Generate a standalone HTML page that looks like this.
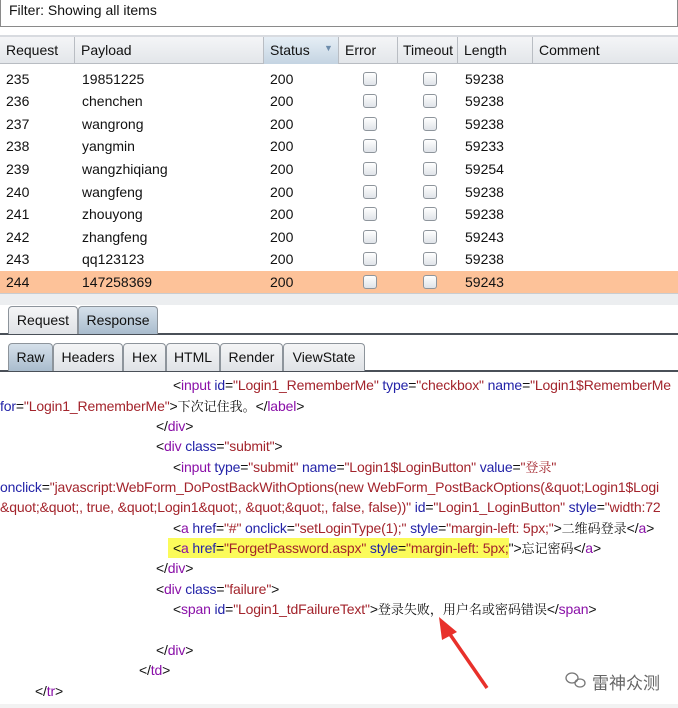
<!DOCTYPE html>
<html><head><meta charset="utf-8"><style>
*{margin:0;padding:0;box-sizing:border-box}
body{width:678px;height:708px;background:#fff;font-family:"Liberation Sans","Noto Sans CJK SC",sans-serif;font-size:14px;color:#111;position:relative;overflow:hidden}
.abs{position:absolute}
.filter{left:0;top:0;width:678px;height:27px;border:1px solid #8a8a8a;border-top:none;background:#fff;padding:2px 0 0 8px;font-size:14px}
.hdr{left:0;top:35px;width:678px;height:29px;background:linear-gradient(#f4f5f7,#e3e6ea);border-top:2px solid #d8dbe0;border-bottom:1px solid #b8bcc2}
.hdr div{position:absolute;top:0;height:27px;padding:5px 0 0 6px;border-right:1px solid #b9bdc3}
.row{position:absolute;left:0;width:678px;height:22.6px}
.row span{position:absolute;top:3px}
.cb{position:absolute;width:14px;height:14px;border:1px solid #8e959c;border-radius:3px;background:linear-gradient(#fff,#dfe3e8)}
.tab{position:absolute;height:28px;border:1px solid #8d949b;border-bottom:none;border-radius:4px 4px 0 0;background:linear-gradient(#f4f5f6,#dfe2e6);padding:5px 0 0 0;text-align:center}
.sel{background:linear-gradient(#d5e0ea,#a9bccd)}
.code{position:absolute;white-space:nowrap;font-size:14px;letter-spacing:-0.15px;line-height:18px;height:18px}
.c{font-family:"Noto Serif CJK SC",serif;font-size:13px;letter-spacing:0;line-height:18px}
.t{color:#8a10a8}.a{color:#2323a8}.v{color:#a3242c}.k{color:#111}
.hl{background:#fbfb5a;padding:2px 0 2px 5px;margin-left:-5px}
</style></head><body>
<div class="abs filter">Filter: Showing all items</div>
<div class="abs" style="left:0;top:27px;width:678px;height:8px;background:#fff"></div>
<div class="abs hdr">
<div style="left:0;width:75px">Request</div>
<div style="left:75px;width:189px">Payload</div>
<div style="left:264px;width:75px;background:linear-gradient(#e6eef5,#c4d4e2)">Status<span style="position:absolute;left:60px;top:6px;font-size:9px;color:#6d8cab">▼</span></div>
<div style="left:339px;width:59px">Error</div>
<div style="left:398px;width:60px;padding-left:5px">Timeout</div>
<div style="left:458px;width:75px">Length</div>
<div style="left:533px;width:145px;border:none">Comment</div>
</div>
<div id="rows"></div>
<div class="abs" style="left:0;top:293px;width:678px;height:12px;background:#eceef0;border-top:1px solid #c9ccd0"></div>
<div class="abs" style="left:0;top:305px;width:678px;height:30px;background:#fff;border-bottom:2px solid #4a5058"></div>
<div class="tab" style="left:8px;top:306px;width:70px">Request</div>
<div class="tab sel" style="left:78px;top:306px;width:80px">Response</div>
<div class="abs" style="left:0;top:335px;width:678px;height:37px;background:#fff;border-bottom:2px solid #4a5058"></div>
<div class="tab sel" style="left:8px;top:343px;width:45px">Raw</div>
<div class="tab" style="left:53px;top:343px;width:70px">Headers</div>
<div class="tab" style="left:123px;top:343px;width:43px">Hex</div>
<div class="tab" style="left:166px;top:343px;width:54px">HTML</div>
<div class="tab" style="left:220px;top:343px;width:63px">Render</div>
<div class="tab" style="left:283px;top:343px;width:82px">ViewState</div>

<div class="code" style="left:173px;top:376px"><span class="k">&lt;</span><span class="t">input</span> <span class="a">id</span>=<span class="v">"Login1_RememberMe"</span> <span class="a">type</span>=<span class="v">"checkbox"</span> <span class="a">name</span>=<span class="v">"Login1$RememberMe</span></div>
<div class="code" style="left:0;top:397px"><span class="a">for</span>=<span class="v">"Login1_RememberMe"</span>&gt;<span class="c">下次记住我。</span>&lt;/<span class="t">label</span>&gt;</div>
<div class="code" style="left:156px;top:417px">&lt;/<span class="t">div</span>&gt;</div>
<div class="code" style="left:156px;top:437px">&lt;<span class="t">div</span> <span class="a">class</span>=<span class="v">"submit"</span>&gt;</div>
<div class="code" style="left:173px;top:458px">&lt;<span class="t">input</span> <span class="a">type</span>=<span class="v">"submit"</span> <span class="a">name</span>=<span class="v">"Login1$LoginButton"</span> <span class="a">value</span>=<span class="v">"<span class="c">登录</span>"</span></div>
<div class="code" style="left:0;top:478px"><span class="a">onclick</span>=<span class="v">"javascript:WebForm_DoPostBackWithOptions(new WebForm_PostBackOptions(&amp;quot;Login1$Logi</span></div>
<div class="code" style="left:0;top:498px"><span class="v">&amp;quot;&amp;quot;, true, &amp;quot;Login1&amp;quot;, &amp;quot;&amp;quot;, false, false))"</span> <span class="a">id</span>=<span class="v">"Login1_LoginButton"</span> <span class="a">style</span>=<span class="v">"width:72</span></div>
<div class="code" style="left:173px;top:519px">&lt;<span class="t">a</span> <span class="a">href</span>=<span class="v">"#"</span> <span class="a">onclick</span>=<span class="v">"setLoginType(1);"</span> <span class="a">style</span>=<span class="v">"margin-left: 5px;"</span>&gt;<span class="c">二维码登录</span>&lt;/<span class="t">a</span>&gt;</div>
<div class="code" style="left:173px;top:539px"><span class="hl">&lt;<span class="t">a</span> <span class="a">href</span>=<span class="v">"ForgetPassword.aspx"</span> <span class="a">style</span>=<span class="v">"margin-left: 5px;</span></span>"&gt;<span class="c">忘记密码</span>&lt;/<span class="t">a</span>&gt;</div>
<div class="code" style="left:156px;top:559px">&lt;/<span class="t">div</span>&gt;</div>
<div class="code" style="left:156px;top:580px">&lt;<span class="t">div</span> <span class="a">class</span>=<span class="v">"failure"</span>&gt;</div>
<div class="code" style="left:173px;top:600px">&lt;<span class="t">span</span> <span class="a">id</span>=<span class="v">"Login1_tdFailureText"</span>&gt;<span class="c">登录失败，用户名或密码错误</span>&lt;/<span class="t">span</span>&gt;</div>
<div class="code" style="left:156px;top:641px">&lt;/<span class="t">div</span>&gt;</div>
<div class="code" style="left:139px;top:661px">&lt;/<span class="t">td</span>&gt;</div>
<div class="code" style="left:35px;top:682px">&lt;/<span class="t">tr</span>&gt;</div>
<div class="abs" style="left:0;top:704px;width:678px;height:4px;background:#f2f2f2"></div>
<svg class="abs" style="left:0;top:0" width="678" height="708">
<line x1="487" y1="688" x2="447" y2="630" stroke="#e8302a" stroke-width="3.5"/>
<polygon points="439,617 457,632 442,640" fill="#e8302a"/>
<g fill="none" stroke="#777" stroke-width="1.3"><ellipse cx="572" cy="678" rx="6" ry="5"/><ellipse cx="580" cy="683" rx="5" ry="4"/></g>
<text x="592" y="689" font-size="17" fill="#666" font-family="Noto Sans CJK SC,sans-serif">雷神众测</text>
</svg>
<script>
var d=[["235","19851225","59238"],["236","chenchen","59238"],["237","wangrong","59238"],["238","yangmin","59233"],["239","wangzhiqiang","59254"],["240","wangfeng","59238"],["241","zhouyong","59238"],["242","zhangfeng","59243"],["243","qq123123","59238"],["244","147258369","59243"]];
var h="";d.forEach(function(r,i){var y=67.5+i*22.6;h+='<div class="row" style="top:'+y+'px;'+(i==9?'background:#fdc299':'')+'"><span style="left:6px">'+r[0]+'</span><span style="left:82px">'+r[1]+'</span><span style="left:270px">200</span><div class="cb" style="left:363px;top:4px"></div><div class="cb" style="left:423px;top:4px"></div><span style="left:465px">'+r[2]+'</span></div>';});
document.getElementById("rows").innerHTML=h;
</script>
</body></html>
